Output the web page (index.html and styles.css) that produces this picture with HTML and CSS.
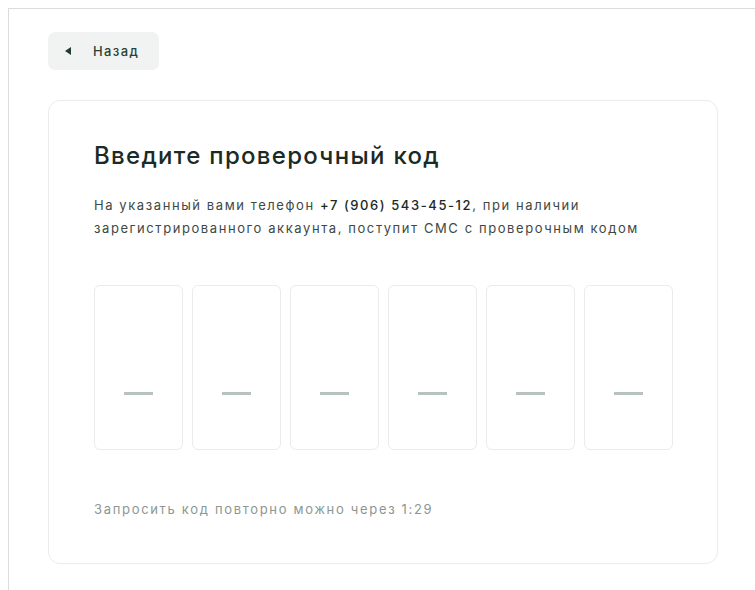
FILE: index.html
```html
<!DOCTYPE html>
<html lang="ru">
<head>
<meta charset="utf-8">
<title>Подтверждение телефона</title>
<link rel="stylesheet" href="styles.css">
</head>
<body>
<div class="frame">
  <button class="back" type="button">
    <span class="back-arrow"></span>
    <span class="back-label">Назад</span>
  </button>
  <section class="card">
    <h1 class="title">Введите проверочный код</h1>
    <p class="lead">На указанный вами телефон <span class="phone">+7 (906) 543-45-12</span>, при наличии<br>зарегистрированного аккаунта, поступит СМС с проверочным кодом</p>
    <div class="code">
      <div class="cell"><span class="dash"></span></div>
      <div class="cell"><span class="dash"></span></div>
      <div class="cell"><span class="dash"></span></div>
      <div class="cell"><span class="dash"></span></div>
      <div class="cell"><span class="dash"></span></div>
      <div class="cell"><span class="dash"></span></div>
    </div>
    <p class="resend">Запросить код повторно можно через 1:29</p>
  </section>
</div>
</body>
</html>
```
FILE: styles.css
```css
html, body {
  margin: 0;
  height: 100%;
  background: #ffffff;
}

body {
  box-sizing: border-box;
  padding: 8px 0 0 8px;
  font-family: Inter, "Noto Sans", sans-serif;
  color: #1c2b24;
  overflow: hidden;
}

.frame {
  box-sizing: border-box;
  height: 100%;
  border-top: 1px solid #dcdcdc;
  border-left: 1px solid #dcdcdc;
  padding: 23px 0 0 39px;
}

.back {
  display: flex;
  align-items: center;
  width: 111px;
  height: 38px;
  padding: 0 0 0 17px;
  border: 0;
  border-radius: 7px;
  background: #f1f3f2;
  font-family: inherit;
  cursor: pointer;
}

.back-arrow {
  width: 0;
  height: 0;
  border-top: 4px solid transparent;
  border-bottom: 4px solid transparent;
  border-right: 6px solid #24392f;
}

.back-label {
  margin-left: 22px;
  font-size: 13px;
  font-weight: 500;
  letter-spacing: 1.4px;
  color: #2a4236;
}

.card {
  box-sizing: border-box;
  width: 670px;
  height: 464px;
  margin-top: 30px;
  padding: 39px 44px 0 45px;
  border: 1px solid #ebecec;
  border-radius: 12px;
}

.title {
  margin: 0;
  font-size: 24px;
  line-height: 32px;
  font-weight: 500;
  color: #1b2a23;
  letter-spacing: 1.3px;
}

.lead {
  margin: 22px 0 0;
  font-size: 13px;
  line-height: 23px;
  letter-spacing: 1.58px;
  color: #3e4943;
}

.phone {
  font-weight: 500;
  color: #1b2a23;
}

.code {
  display: grid;
  grid-template-columns: repeat(6, 1fr);
  gap: 9px;
  margin-top: 45px;
}

.cell {
  box-sizing: border-box;
  height: 165px;
  padding-top: 106px;
  border: 1px solid #ebebeb;
  border-radius: 6px;
  display: flex;
  justify-content: center;
}

.dash {
  display: block;
  width: 29px;
  height: 3px;
  background: #b9c3be;
}

.resend {
  margin: 49px 0 0;
  font-size: 13px;
  line-height: 20px;
  letter-spacing: 1.68px;
  color: #8c9792;
}
```
